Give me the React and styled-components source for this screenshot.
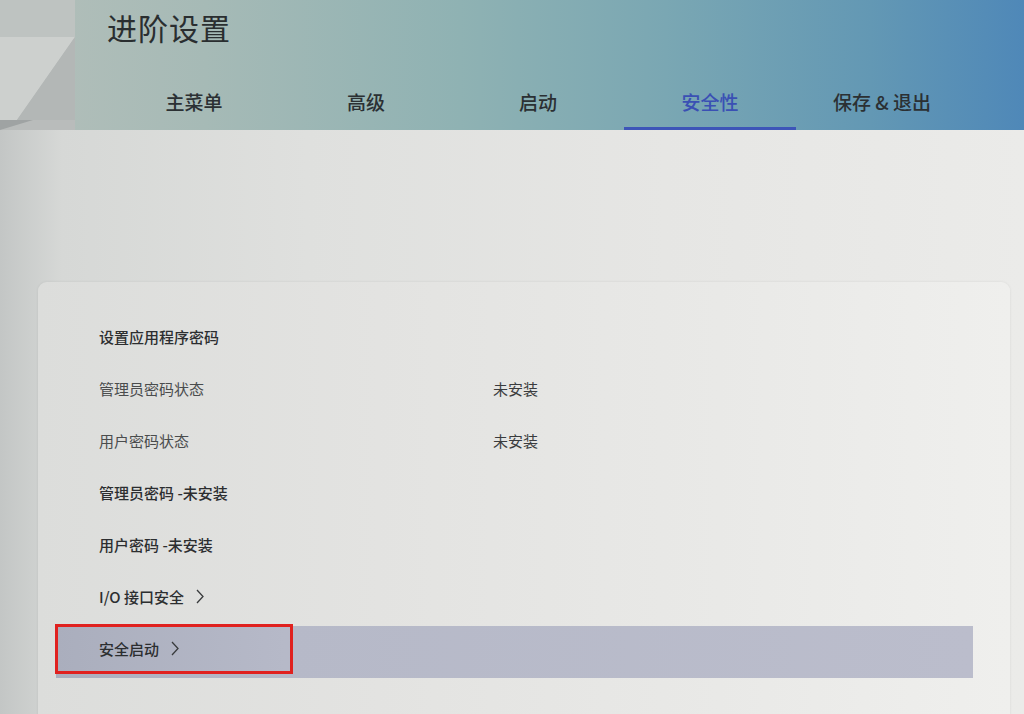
import React from 'react';
import styled, { createGlobalStyle } from 'styled-components';

const GlobalStyle = createGlobalStyle`
  html, body {
    margin: 0;
    padding: 0;
    width: 1024px;
    height: 714px;
    overflow: hidden;
    background: #dcdddb;
  }
  * { box-sizing: border-box; }
`;

const Screen = styled.div`
  width: 1024px;
  height: 714px;
  display: flex;
  flex-direction: column;
  font-family: "Noto Sans CJK SC", "Noto Sans", sans-serif;
  background: linear-gradient(90deg, #c3c6c5 0%, #d6d8d6 6%, #dfe0de 30%, #e6e6e4 65%, #ebebe9 100%);
  overflow: hidden;
`;

const Header = styled.header`
  height: 130px;
  display: flex;
  flex-shrink: 0;
  background: linear-gradient(90deg, #b4bfba 0%, #a6bab6 20%, #8fb2b3 45%, #7aa7b3 65%, #6398b4 85%, #4f88b8 100%);
`;

const Deco = styled.svg`
  width: 75px;
  height: 130px;
  flex-shrink: 0;
  display: block;
`;

const HeaderMain = styled.div`
  flex: 1;
  display: flex;
  flex-direction: column;
  justify-content: space-between;
  padding-left: 32px;
`;

const Title = styled.h1`
  margin: 0;
  padding-top: 9px;
  font-size: 30px;
  line-height: 36px;
  font-weight: 400;
  color: #2a2e30;
  letter-spacing: 1px;
`;

const Tabs = styled.nav`
  display: flex;
  margin-left: 1px;
`;

const Tab = styled.div`
  width: 172px;
  height: 55px;
  display: flex;
  align-items: center;
  justify-content: center;
  font-size: 19px;
  font-weight: 500;
  color: ${(p) => (p.$active ? '#3a50b4' : '#2b3033')};
  border-bottom: 3px solid ${(p) => (p.$active ? '#3d55b8' : 'transparent')};
  white-space: pre;
`;

const Body = styled.main`
  flex: 1;
  display: flex;
  flex-direction: column;
  padding: 152px 14px 0 38px;
`;

const Card = styled.section`
  flex: 1;
  border-radius: 9px 9px 0 0;
  background: linear-gradient(90deg, #dcdddb 0%, #e3e3e1 35%, #e9e9e7 70%, #efefed 100%);
  box-shadow: 0 0 3px rgba(0, 0, 0, 0.08);
  padding: 32px 37px 40px 18px;
  display: flex;
  flex-direction: column;
`;

const Row = styled.div`
  position: relative;
  height: 52px;
  display: flex;
  align-items: center;
  padding: 0 0 8px 43px;
  font-size: 15px;
  color: ${(p) => (p.$muted ? '#4a4c4d' : '#2c2e30')};
  font-weight: ${(p) => (p.$muted ? 400 : 500)};
  background: ${(p) =>
    p.$selected
      ? 'linear-gradient(90deg, #aaaebd 0%, #b6b9c8 25%, #bbbdcc 100%)'
      : 'transparent'};
`;

const Label = styled.span`
  width: ${(p) => (p.$fixed ? '394px' : 'auto')};
  display: flex;
  align-items: center;
  gap: 12px;
`;

const Value = styled.span`
  color: #3a3c3e;
  font-weight: 400;
`;

const Chevron = styled.svg`
  width: 8px;
  height: 15px;
  display: block;
`;

const Mark = styled.div`
  position: absolute;
  left: -1px;
  top: -2px;
  width: 238px;
  height: 50px;
  border: 3px solid #e0211f;
  pointer-events: none;
`;

const tabs = ['主菜单', '高级', '启动', '安全性', '保存 & 退出'];

const rows = [
  { label: '设置应用程序密码' },
  { label: '管理员密码状态', value: '未安装', muted: true },
  { label: '用户密码状态', value: '未安装', muted: true },
  { label: '管理员密码 -未安装' },
  { label: '用户密码 -未安装' },
  { label: 'I/O 接口安全', sub: true },
  { label: '安全启动', sub: true, selected: true },
];

function Arrow() {
  return (
    <Chevron viewBox="0 0 8 15">
      <polyline points="1,1 7,7.5 1,14" fill="none" stroke="#3a3c3e" strokeWidth="1.3" />
    </Chevron>
  );
}

export default function App() {
  return (
    <Screen>
      <GlobalStyle />
      <Header>
        <Deco viewBox="0 0 75 130" preserveAspectRatio="none">
          <rect x="0" y="0" width="75" height="130" fill="#b4b8b7" />
          <rect x="0" y="0" width="75" height="37" fill="#bec3c1" />
          <polygon points="0,37 75,37 17,120 0,120" fill="#cdd0ce" />
          <polygon points="75,37 75,120 17,120" fill="#b3b7b6" />
          <rect x="0" y="120" width="75" height="10" fill="#b9bcbb" />
          <polygon points="0,120 33,120 0,130" fill="#9fa3a3" />
        </Deco>
        <HeaderMain>
          <Title>进阶设置</Title>
          <Tabs>
            {tabs.map((t) => (
              <Tab key={t} $active={t === '安全性'}>
                {t}
              </Tab>
            ))}
          </Tabs>
        </HeaderMain>
      </Header>
      <Body>
        <Card>
          {rows.map((r) => (
            <Row key={r.label} $muted={r.muted} $selected={r.selected}>
              <Label $fixed={!!r.value}>
                {r.label}
                {r.sub && <Arrow />}
              </Label>
              {r.value && <Value>{r.value}</Value>}
              {r.selected && <Mark />}
            </Row>
          ))}
        </Card>
      </Body>
    </Screen>
  );
}
